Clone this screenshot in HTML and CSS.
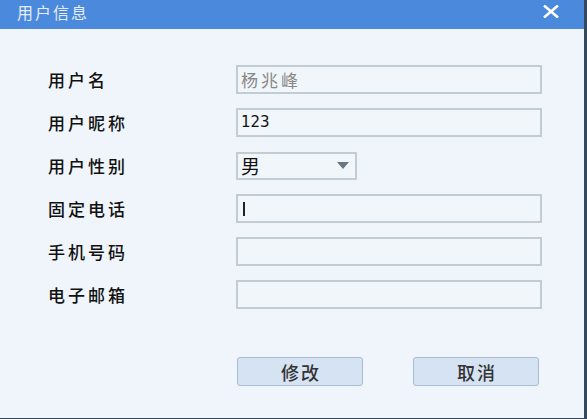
FILE: index.html
```html
<!DOCTYPE html>
<html>
<head>
    <meta charset="utf-8">
    <title>用户信息</title>
    <link rel="stylesheet" href="styles.css">
</head>
<body>
    <div class="dialog">
        <header class="title-bar">
            <span class="title">用户信息</span>
            <span class="close">
                <svg width="20" height="13" viewBox="0 0 20 13"><path d="M3 0.5 L17 12.5 M17 0.5 L3 12.5" stroke="#fff" stroke-width="2.6"/></svg>
            </span>
        </header>
        <form class="form">
            <div class="row">
                <label class="label">用户名</label>
                <div class="field readonly">杨兆峰</div>
            </div>
            <div class="row">
                <label class="label">用户昵称</label>
                <div class="field">123</div>
            </div>
            <div class="row">
                <label class="label">用户性别</label>
                <div class="select">
                    <span class="select-value">男</span>
                    <span class="arrow"></span>
                </div>
            </div>
            <div class="row">
                <label class="label">固定电话</label>
                <div class="field"><span class="caret"></span></div>
            </div>
            <div class="row">
                <label class="label">手机号码</label>
                <div class="field"></div>
            </div>
            <div class="row">
                <label class="label">电子邮箱</label>
                <div class="field"></div>
            </div>
            <div class="buttons">
                <button type="button" class="btn">修改</button>
                <button type="button" class="btn">取消</button>
            </div>
        </form>
    </div>
</body>
</html>
```
FILE: styles.css
```css
html, body {
    margin: 0;
    padding: 0;
}
body {
    width: 587px;
    height: 419px;
    background: #34495e;
    font-family: "Noto Sans CJK SC", "Liberation Sans", sans-serif;
    overflow: hidden;
}
.dialog {
    width: 584px;
    height: 418px;
    background: #eff5fa;
}
.title-bar {
    height: 29px;
    background: #4a89dc;
    display: flex;
    align-items: center;
    justify-content: space-between;
    padding: 0 23px 0 17px;
    box-sizing: border-box;
}
.title {
    color: #e4ecf8;
    font-size: 16px;
    letter-spacing: 2px;
    line-height: 29px;
    margin-top: -4px;
}
.close {
    display: flex;
    margin-top: -7px;
}
.form {
    padding: 36px 0 0 48px;
}
.row {
    display: flex;
    align-items: center;
    height: 29px;
    margin-bottom: 14px;
}
.label {
    width: 188px;
    font-size: 17px;
    font-weight: 500;
    letter-spacing: 3px;
    color: #111;
}
.field {
    width: 306px;
    height: 29px;
    box-sizing: border-box;
    border: 2px solid #c2cdd3;
    background: #f0f6fa;
    font-family: "DejaVu Sans", sans-serif;
    font-size: 15px;
    line-height: 25px;
    padding-left: 3px;
    color: #111;
    display: flex;
    align-items: center;
}
.readonly {
    color: #888;
    font-family: "Noto Sans CJK SC", sans-serif;
    font-size: 17px;
    letter-spacing: 3px;
}
.caret {
    display: block;
    width: 2px;
    height: 14px;
    background: #222;
    margin-left: 2px;
}
.select {
    width: 121px;
    height: 28px;
    box-sizing: border-box;
    border: 2px solid #c2cdd3;
    background: #f0f6fa;
    display: flex;
    align-items: center;
    justify-content: space-between;
    padding: 0 6px 0 3px;
}
.select-value {
    font-size: 19px;
    color: #111;
    line-height: 24px;
}
.arrow {
    width: 0;
    height: 0;
    border-left: 6px solid transparent;
    border-right: 6px solid transparent;
    border-top: 7px solid #6a7680;
}
.buttons {
    display: flex;
    gap: 50px;
    padding: 34px 0 0 189px;
}
.btn {
    width: 126px;
    height: 29px;
    border: 1px solid #a9bcd4;
    border-radius: 3px;
    background: #d6e3f3;
    font-family: "Noto Sans CJK SC", sans-serif;
    font-size: 18px;
    font-weight: 500;
    letter-spacing: 2px;
    color: #333;
    padding: 0 0 0 2px;
}
```
